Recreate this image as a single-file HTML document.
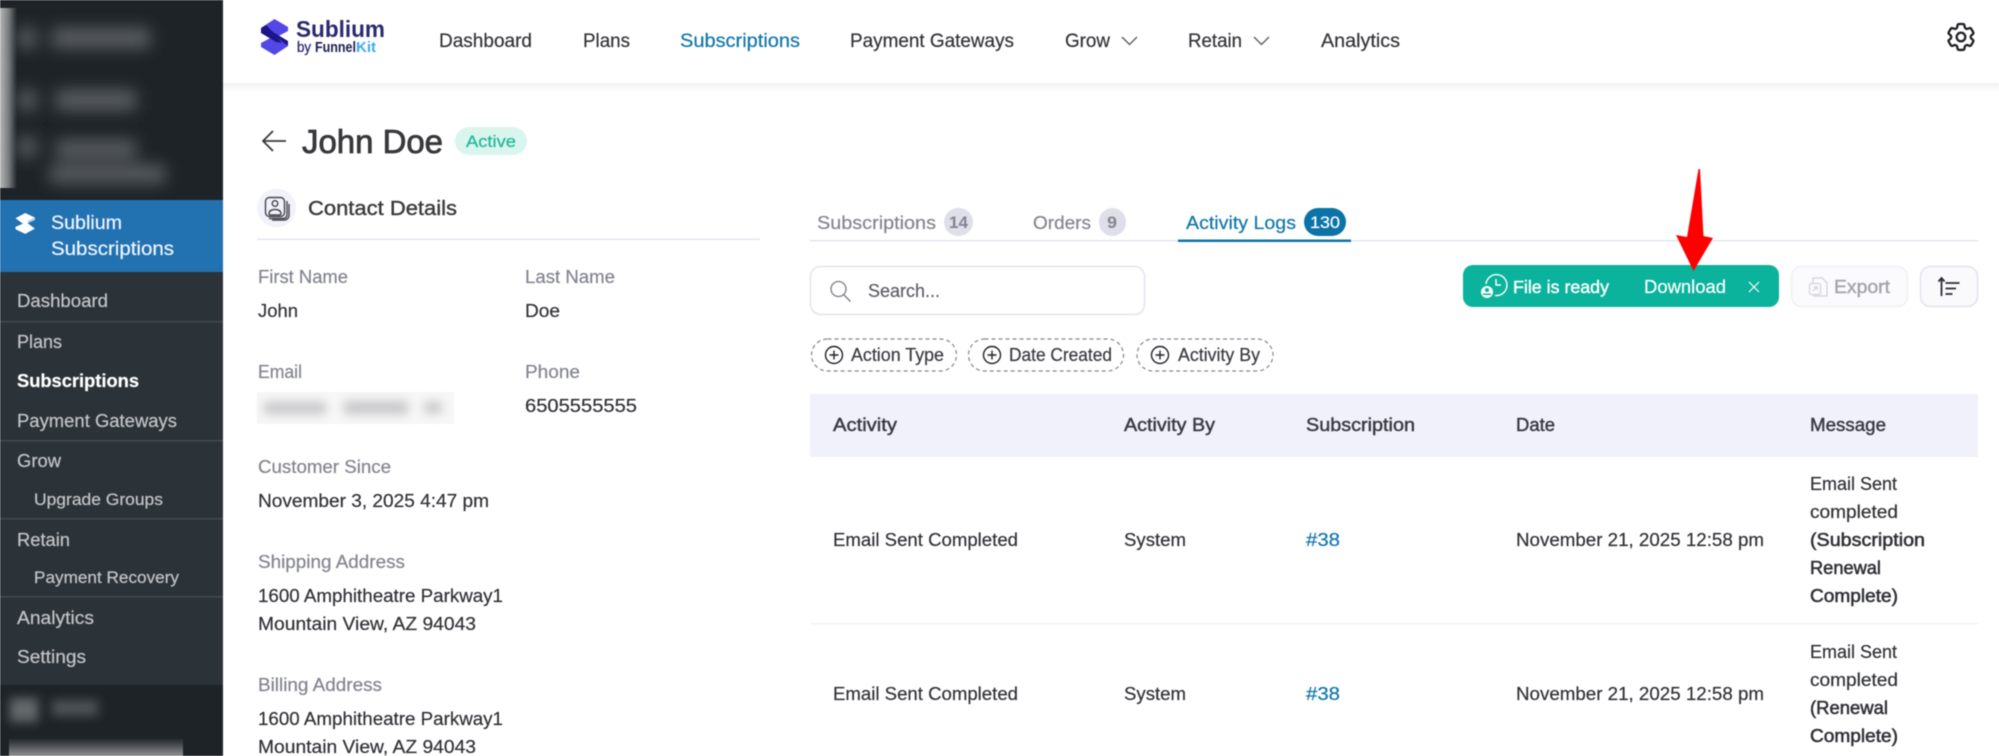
<!DOCTYPE html>
<html lang="en"><head><meta charset="utf-8"><title>Sublium Subscriptions - John Doe</title>
<style>
html,body{margin:0;padding:0;width:1999px;height:756px;overflow:hidden;background:#fff}
svg{display:block;position:absolute;left:0;top:0;filter:blur(.45px)}
text{font-family:"Liberation Sans",sans-serif;font-size:18.5px;fill:#3b3c42;white-space:pre;stroke-width:.2px}
.side{font-size:18px;fill:#c3c5c8;stroke:#c3c5c8}
.sub{font-size:16.5px;fill:#c3c5c8;stroke:#c3c5c8}
.nav{font-size:19px;fill:#333338;stroke:#333338}
.lab{fill:#83848f;stroke:#83848f}
.val{fill:#303136;stroke:#303136}
.th{fill:#3a3b41;stroke:#3a3b41;stroke-width:.45px}
.lnk{fill:#0f75ab;stroke:#0f75ab}
.flt{font-size:18px;fill:#3a3b41;stroke:#3a3b41}
.bd{stroke-width:.55px}
</style></head><body>
<svg width="1999" height="756" viewBox="0 0 1999 756" xmlns="http://www.w3.org/2000/svg">
<defs>
<filter id="b9" x="-40%" y="-150%" width="180%" height="400%"><feGaussianBlur stdDeviation="8"/></filter>
<filter id="b5" x="-30%" y="-100%" width="160%" height="300%"><feGaussianBlur stdDeviation="5"/></filter>
<linearGradient id="sh" x1="0" y1="0" x2="0" y2="1"><stop offset="0" stop-color="#f1f1f1"/><stop offset="1" stop-color="#fff"/></linearGradient>
<linearGradient id="st" x1="0" y1="0" x2="1" y2="0"><stop offset="0" stop-color="#b5b7b8"/><stop offset=".5" stop-color="#7b7e80"/><stop offset="1" stop-color="#1d2327"/></linearGradient>
<linearGradient id="bt" x1="0" y1="0" x2="0" y2="1"><stop offset="0" stop-color="#1d2327"/><stop offset="1" stop-color="#8e9092"/></linearGradient>
</defs>

<!-- WP sidebar -->
<rect x="0" y="0" width="223" height="756" fill="#1d2327"/>
<rect x="0" y="8" width="17" height="180" fill="url(#st)"/>
<g fill="#5a5e62" filter="url(#b9)">
<rect x="18" y="28" width="18" height="20"/><rect x="52" y="28" width="98" height="20"/>
<rect x="18" y="90" width="18" height="20"/><rect x="56" y="90" width="80" height="20"/>
<rect x="18" y="137" width="18" height="20"/><rect x="56" y="140" width="80" height="18"/>
<rect x="50" y="165" width="115" height="18"/>
</g>
<rect x="0" y="200" width="223" height="72" fill="#2271b1"/>
<g transform="translate(15.500,213) scale(.72,.58)" fill="#fff">
<path d="M0 9 13.500 0 27 8V12L12 20Z"/>
<path d="M27 27 13.500 36 0 28V24L15 16Z"/>
<path d="M27 8 27 12 19 16.500 16 14.500Z" fill="#2271b1" opacity=".35"/>
</g>
<text x="51" y="229" style="font-size:19.5px;fill:#f0f6fc;stroke:#f0f6fc" textLength="71" lengthAdjust="spacingAndGlyphs">Sublium</text>
<text x="51" y="255" style="font-size:19.5px;fill:#f0f6fc;stroke:#f0f6fc" textLength="123" lengthAdjust="spacingAndGlyphs">Subscriptions</text>
<rect x="0" y="272" width="223" height="413" fill="#2c3338"/>
<g fill="#43494e"><rect x="0" y="321" width="223" height="1.500"/><rect x="0" y="440" width="223" height="1.500"/><rect x="0" y="518" width="223" height="1.500"/><rect x="0" y="596" width="223" height="1.500"/></g>
<text class="side" x="17" y="307" textLength="91" lengthAdjust="spacingAndGlyphs">Dashboard</text>
<text class="side" x="17" y="348" textLength="45" lengthAdjust="spacingAndGlyphs">Plans</text>
<text class="side" x="17" y="387" textLength="122" lengthAdjust="spacingAndGlyphs" style="fill:#fff;stroke:#fff;font-weight:700">Subscriptions</text>
<text class="side" x="17" y="427" textLength="160" lengthAdjust="spacingAndGlyphs">Payment Gateways</text>
<text class="side" x="17" y="467" textLength="44" lengthAdjust="spacingAndGlyphs">Grow</text>
<text class="sub" x="34" y="505" textLength="129" lengthAdjust="spacingAndGlyphs">Upgrade Groups</text>
<text class="side" x="17" y="546" textLength="53" lengthAdjust="spacingAndGlyphs">Retain</text>
<text class="sub" x="34" y="583" textLength="145" lengthAdjust="spacingAndGlyphs">Payment Recovery</text>
<text class="side" x="17" y="624" textLength="77" lengthAdjust="spacingAndGlyphs">Analytics</text>
<text class="side" x="17" y="663" textLength="69" lengthAdjust="spacingAndGlyphs">Settings</text>
<g filter="url(#b5)"><rect x="10" y="698" width="28" height="24" fill="#63676a"/><rect x="52" y="700" width="46" height="16" fill="#4e5256"/></g>
<rect x="9" y="738" width="174" height="18" fill="url(#bt)"/>

<!-- Top header -->
<rect x="223" y="83" width="1776" height="9" fill="url(#sh)"/>
<g transform="translate(261,19)">
<path d="M0 9 13.500 0 27 8V12L12 20Z" fill="#5347e8"/>
<path d="M27 27 13.500 36 0 28V24L15 16Z" fill="#5347e8"/>
<path d="M0 9 16 18.500 27 27 27 22 12 13 5 6Z" fill="#1b1588"/>
<path d="M0 9V14L15 23 21 24 16 18.500Z" fill="#1b1588"/>
</g>
<text x="296" y="37" style="font-size:23px;font-weight:700;fill:#2b2a72" textLength="89" lengthAdjust="spacingAndGlyphs">Sublium</text>
<text x="297" y="52" style="font-size:14.5px;fill:#2b2a72;stroke:#2b2a72;stroke-width:.3px" textLength="14" lengthAdjust="spacingAndGlyphs">by</text>
<text x="315" y="52" style="font-size:14.5px;font-weight:700;fill:#1c1d4d" textLength="41" lengthAdjust="spacingAndGlyphs">Funnel</text>
<text x="356" y="52" style="font-size:14.5px;font-weight:700;fill:#3da9f5" textLength="20" lengthAdjust="spacingAndGlyphs">Kit</text>

<text class="nav" x="439" y="47" textLength="93" lengthAdjust="spacingAndGlyphs">Dashboard</text>
<text class="nav" x="583" y="47" textLength="47" lengthAdjust="spacingAndGlyphs">Plans</text>
<text class="nav" x="680" y="47" textLength="120" lengthAdjust="spacingAndGlyphs" style="fill:#0f75ab;stroke:#0f75ab">Subscriptions</text>
<text class="nav" x="850" y="47" textLength="164" lengthAdjust="spacingAndGlyphs">Payment Gateways</text>
<text class="nav" x="1065" y="47" textLength="45" lengthAdjust="spacingAndGlyphs">Grow</text>
<path d="M1122 37l7.500 7.500 7.500-7.500" fill="none" stroke="#55565c" stroke-width="1.300"/>
<text class="nav" x="1188" y="47" textLength="54" lengthAdjust="spacingAndGlyphs">Retain</text>
<path d="M1254 37l7.500 7.500 7.500-7.500" fill="none" stroke="#55565c" stroke-width="1.300"/>
<text class="nav" x="1321" y="47" textLength="79" lengthAdjust="spacingAndGlyphs">Analytics</text>
<g transform="translate(1943.700,19.700) scale(1.440)" fill="none" stroke="#1f2024" stroke-width="1.600">
<path d="M9.594 3.94c.09-.542.56-.94 1.11-.94h2.593c.55 0 1.02.398 1.11.94l.213 1.281c.063.374.313.686.645.87.074.04.147.083.22.127.324.196.72.257 1.075.124l1.217-.456a1.125 1.125 0 011.37.49l1.296 2.247a1.125 1.125 0 01-.26 1.431l-1.003.827c-.293.24-.438.613-.431.992a6.759 6.759 0 010 .255c-.007.378.138.75.43.99l1.005.828c.424.35.534.954.26 1.43l-1.298 2.247a1.125 1.125 0 01-1.369.491l-1.217-.456c-.355-.133-.75-.072-1.076.124a6.57 6.57 0 01-.22.128c-.331.183-.581.495-.644.869l-.213 1.28c-.09.543-.56.941-1.11.941h-2.594c-.55 0-1.02-.398-1.11-.94l-.213-1.281c-.062-.374-.312-.686-.644-.87a6.52 6.52 0 01-.22-.127c-.325-.196-.72-.257-1.076-.124l-1.217.456a1.125 1.125 0 01-1.369-.49l-1.297-2.247a1.125 1.125 0 01.26-1.431l1.004-.827c.292-.24.437-.613.43-.992a6.932 6.932 0 010-.255c.007-.378-.138-.75-.43-.99l-1.004-.828a1.125 1.125 0 01-.26-1.43l1.297-2.247a1.125 1.125 0 011.37-.491l1.216.456c.356.133.751.072 1.076-.124.072-.044.146-.087.22-.128.332-.183.582-.495.644-.869l.214-1.281z"/>
<circle cx="12" cy="12" r="3"/></g>

<!-- Title -->
<path d="M286 141H263M273 131l-10 10 10 10" fill="none" stroke="#3a3a3e" stroke-width="1.800"/>
<text x="302" y="153" style="font-size:33px;fill:#38383c;stroke:#38383c;stroke-width:.8px" textLength="141" lengthAdjust="spacingAndGlyphs">John Doe</text>
<rect x="455" y="127" width="72" height="28" rx="14" fill="#d9f5ee"/>
<text x="466" y="147" style="font-size:16.500px;fill:#1db896;stroke:#1db896" textLength="50" lengthAdjust="spacingAndGlyphs">Active</text>

<!-- Contact details -->
<circle cx="276.500" cy="208" r="19.500" fill="#f2f2fa"/>
<g fill="none" stroke="#46474d" stroke-width="1.400">
<rect x="265.500" y="197.500" width="19" height="19" rx="4"/>
<circle cx="275" cy="203.500" r="2.800"/>
<path d="M269 214c0-3 2-4.500 6-4.500s6 1.500 6 4.500c0 1-1 1-6 1s-6 0-6-1z"/>
<path d="M287 201v13c0 3-1.500 4.500-4 4.500H269"/>
<path d="M289 204v11c0 3-2 5-5 5H272"/>
</g>
<text x="308" y="215" style="font-size:20.500px;fill:#3a3a3e;stroke:#3a3a3e;stroke-width:.4px" textLength="149" lengthAdjust="spacingAndGlyphs">Contact Details</text>
<rect x="257" y="238.500" width="503" height="1.500" fill="#e4e4f0"/>

<text class="lab" x="258" y="283" textLength="90" lengthAdjust="spacingAndGlyphs">First Name</text>
<text class="val" x="258" y="317" textLength="40" lengthAdjust="spacingAndGlyphs">John</text>
<text class="lab" x="525" y="283" textLength="90" lengthAdjust="spacingAndGlyphs">Last Name</text>
<text class="val" x="525" y="317" textLength="35" lengthAdjust="spacingAndGlyphs">Doe</text>
<text class="lab" x="258" y="378" textLength="44" lengthAdjust="spacingAndGlyphs">Email</text>
<rect x="257" y="392" width="197" height="32" fill="#f7f7f7"/>
<g fill="#c6c6c9" filter="url(#b5)"><rect x="264" y="402" width="62" height="12"/><rect x="344" y="401" width="64" height="13"/><rect x="424" y="402" width="18" height="11"/></g>
<text class="lab" x="525" y="378" textLength="55" lengthAdjust="spacingAndGlyphs">Phone</text>
<text class="val" x="525" y="412" textLength="112" lengthAdjust="spacingAndGlyphs">6505555555</text>
<text class="lab" x="258" y="473" textLength="133" lengthAdjust="spacingAndGlyphs">Customer Since</text>
<text class="val" x="258" y="507" textLength="231" lengthAdjust="spacingAndGlyphs">November 3, 2025 4:47 pm</text>
<text class="lab" x="258" y="568" textLength="147" lengthAdjust="spacingAndGlyphs">Shipping Address</text>
<text class="val" x="258" y="602" textLength="245" lengthAdjust="spacingAndGlyphs">1600 Amphitheatre Parkway1</text>
<text class="val" x="258" y="630" textLength="218" lengthAdjust="spacingAndGlyphs">Mountain View, AZ 94043</text>
<text class="lab" x="258" y="691" textLength="124" lengthAdjust="spacingAndGlyphs">Billing Address</text>
<text class="val" x="258" y="725" textLength="245" lengthAdjust="spacingAndGlyphs">1600 Amphitheatre Parkway1</text>
<text class="val" x="258" y="753" textLength="218" lengthAdjust="spacingAndGlyphs">Mountain View, AZ 94043</text>

<!-- Tabs -->
<rect x="810" y="240" width="1168" height="1.500" fill="#e4e4f0"/>
<text class="lab" x="817" y="229" textLength="119" lengthAdjust="spacingAndGlyphs">Subscriptions</text>
<rect x="944" y="208" width="29" height="28" rx="14" fill="#dfdfea"/>
<text x="949" y="228" style="font-size:17px;font-weight:700;fill:#83848f" textLength="19" lengthAdjust="spacingAndGlyphs">14</text>
<text class="lab" x="1033" y="229" textLength="58" lengthAdjust="spacingAndGlyphs">Orders</text>
<rect x="1099" y="208" width="27" height="28" rx="13.500" fill="#dfdfea"/>
<text x="1107" y="228" style="font-size:17px;font-weight:700;fill:#83848f" textLength="10" lengthAdjust="spacingAndGlyphs">9</text>
<text x="1186" y="229" style="fill:#0f75ab;stroke:#0f75ab" textLength="110" lengthAdjust="spacingAndGlyphs">Activity Logs</text>
<rect x="1304" y="208" width="42" height="28" rx="14" fill="#0b73a8"/>
<text x="1310" y="228" style="font-size:17px;fill:#fff;stroke:#fff" textLength="30" lengthAdjust="spacingAndGlyphs">130</text>
<rect x="1178" y="239.500" width="173" height="2.500" fill="#0f75ab"/>

<!-- Search -->
<rect x="810.500" y="266.500" width="334" height="48" rx="10" fill="#fff" stroke="#e3e3f0" stroke-width="1.500"/>
<circle cx="838.500" cy="289" r="7.500" fill="none" stroke="#7a7b84" stroke-width="1.300"/>
<path d="M844 295l6.500 6.500" stroke="#7a7b84" stroke-width="1.300"/>
<text x="868" y="297" style="fill:#5f6068;stroke:#5f6068" textLength="72" lengthAdjust="spacingAndGlyphs">Search...</text>

<!-- Filters -->
<g fill="none" stroke="#85868e" stroke-width="1.200" stroke-dasharray="4 3">
<rect x="811.500" y="339" width="145" height="32" rx="16"/>
<rect x="968.500" y="339" width="155" height="32" rx="16"/>
<rect x="1137" y="339" width="136" height="32" rx="16"/>
</g>
<g fill="none" stroke="#222328" stroke-width="1.400">
<circle cx="834" cy="355" r="8.500"/><path d="M834 350.500v9M829.500 355h9"/>
<circle cx="992" cy="355" r="8.500"/><path d="M992 350.500v9M987.500 355h9"/>
<circle cx="1160" cy="355" r="8.500"/><path d="M1160 350.500v9M1155.500 355h9"/>
</g>
<text class="flt" x="851" y="361" textLength="93" lengthAdjust="spacingAndGlyphs">Action Type</text>
<text class="flt" x="1009" y="361" textLength="103" lengthAdjust="spacingAndGlyphs">Date Created</text>
<text class="flt" x="1178" y="361" textLength="82" lengthAdjust="spacingAndGlyphs">Activity By</text>

<!-- File ready -->
<rect x="1463" y="265" width="316" height="42" rx="10" fill="#0bb39c"/>
<g fill="none" stroke="#fff" stroke-width="1.400">
<path d="M1486 284a10.500 10.500 0 1 1 9 11.500"/>
<path d="M1496 279v6h5"/>
</g>
<circle cx="1487" cy="292" r="6" fill="#fff"/>
<circle cx="1487" cy="290" r="2" fill="#0bb39c"/>
<rect x="1483" y="293.500" width="8" height="1.500" fill="#0bb39c"/>
<text x="1513" y="293" style="font-size:17.500px;fill:#fff;stroke:#fff;stroke-width:.4px" textLength="96" lengthAdjust="spacingAndGlyphs">File is ready</text>
<text x="1644" y="293" style="fill:#fff;stroke:#fff" textLength="82" lengthAdjust="spacingAndGlyphs">Download</text>
<path d="M1749 282l10 10M1759 282l-10 10" stroke="#fff" stroke-width="1.100"/>

<!-- Export -->
<rect x="1791.500" y="266.500" width="116" height="40" rx="10" fill="#fbfbfd" stroke="#f0f0f6" stroke-width="1.500"/>
<g fill="none" stroke="#d2d3d8" stroke-width="1.300">
<path d="M1813 283v-5h9l5 5v13h-14"/>
<rect x="1809.500" y="283.500" width="11" height="11" rx="2"/>
<path d="M1813 291l4-4M1814 287h3v3"/>
</g>
<text x="1834" y="293" style="fill:#a3a3aa;stroke:#a3a3aa;stroke-width:.4px" textLength="56" lengthAdjust="spacingAndGlyphs">Export</text>

<!-- Sort -->
<rect x="1920.500" y="266.500" width="57" height="40" rx="10" fill="#fafafc" stroke="#e2e2f0" stroke-width="1.500"/>
<g stroke="#2c2d32" stroke-width="1.800" fill="none">
<path d="M1941.500 278v18M1938.500 281.500l3-3.500 3 3.500"/>
<path d="M1945.500 283h14M1945.500 288.500h10.500M1945.500 294h7"/>
</g>

<!-- Red arrow -->
<path d="M1698.500 169 1700 169 1703.500 236 1713 238 1693.500 271 1676 235 1687 237z" fill="#fe0000"/>

<!-- Table -->
<rect x="810" y="394" width="1168" height="63" fill="#f0f1fa"/>
<rect x="810" y="623" width="1168" height="1.500" fill="#f3f3f9"/>
<text class="th" x="833" y="431" textLength="64" lengthAdjust="spacingAndGlyphs">Activity</text>
<text class="th" x="1124" y="431" textLength="91" lengthAdjust="spacingAndGlyphs">Activity By</text>
<text class="th" x="1306" y="431" textLength="109" lengthAdjust="spacingAndGlyphs">Subscription</text>
<text class="th" x="1516" y="431" textLength="39" lengthAdjust="spacingAndGlyphs">Date</text>
<text class="th" x="1810" y="431" textLength="76" lengthAdjust="spacingAndGlyphs">Message</text>

<text class="val" x="833" y="546" textLength="185" lengthAdjust="spacingAndGlyphs">Email Sent Completed</text>
<text class="val" x="1124" y="546" textLength="62" lengthAdjust="spacingAndGlyphs">System</text>
<text class="lnk" x="1306" y="546" textLength="34" lengthAdjust="spacingAndGlyphs">#38</text>
<text class="val" x="1516" y="546" textLength="248" lengthAdjust="spacingAndGlyphs">November 21, 2025 12:58 pm</text>
<text class="val" x="1810" y="490" textLength="87" lengthAdjust="spacingAndGlyphs">Email Sent</text>
<text class="val" x="1810" y="518" textLength="88" lengthAdjust="spacingAndGlyphs">completed</text>
<text class="val bd" x="1810" y="546" textLength="115" lengthAdjust="spacingAndGlyphs">(Subscription</text>
<text class="val bd" x="1810" y="574" textLength="71" lengthAdjust="spacingAndGlyphs">Renewal</text>
<text class="val bd" x="1810" y="602" textLength="88" lengthAdjust="spacingAndGlyphs">Complete)</text>

<text class="val" x="833" y="700" textLength="185" lengthAdjust="spacingAndGlyphs">Email Sent Completed</text>
<text class="val" x="1124" y="700" textLength="62" lengthAdjust="spacingAndGlyphs">System</text>
<text class="lnk" x="1306" y="700" textLength="34" lengthAdjust="spacingAndGlyphs">#38</text>
<text class="val" x="1516" y="700" textLength="248" lengthAdjust="spacingAndGlyphs">November 21, 2025 12:58 pm</text>
<text class="val" x="1810" y="658" textLength="87" lengthAdjust="spacingAndGlyphs">Email Sent</text>
<text class="val" x="1810" y="686" textLength="88" lengthAdjust="spacingAndGlyphs">completed</text>
<text class="val bd" x="1810" y="714" textLength="78" lengthAdjust="spacingAndGlyphs">(Renewal</text>
<text class="val bd" x="1810" y="742" textLength="88" lengthAdjust="spacingAndGlyphs">Complete)</text>
</svg>
</body></html>
